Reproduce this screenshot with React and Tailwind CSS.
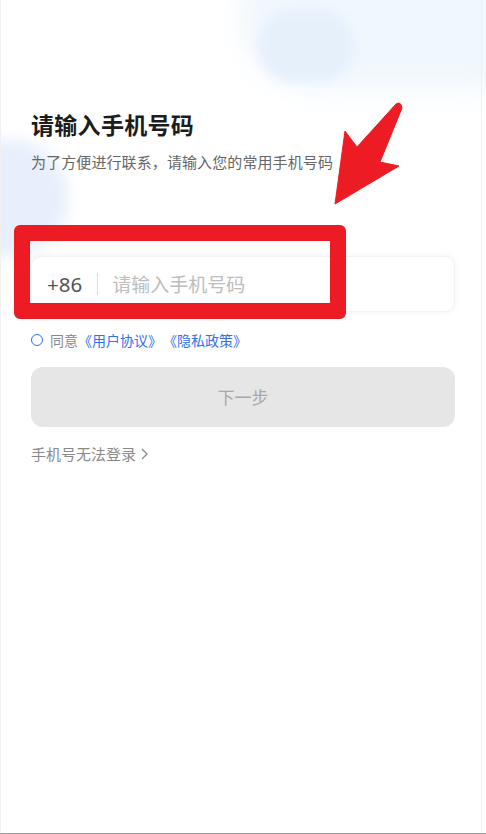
import React from "react";

export default function App() {
  return (
    <div
      className="relative w-[486px] h-[834px] overflow-hidden bg-white border-b border-[#9a9a9a]"
      style={{ fontFamily: '"Noto Sans CJK SC", "Noto Sans", sans-serif' }}
    >
      {/* background clouds */}
      <div className="pointer-events-none absolute -top-[60px] left-[240px] w-[320px] h-[150px] rounded-full bg-[#f0f7fd] blur-[14px]" />
      <div className="pointer-events-none absolute top-[10px] left-[258px] w-[96px] h-[72px] rounded-full bg-[#e6f0fb] blur-[5px]" />
      <div className="pointer-events-none absolute top-[140px] -left-[60px] w-[128px] h-[116px] rounded-full bg-[#e6effb] blur-[8px]" />
      <div className="pointer-events-none absolute top-[0px] left-[0px] w-[482px] h-[834px] border-x border-[#f0f0f0]" />

      <div className="relative px-[31px] pt-[108px]">
        <h1 className="text-[23px] leading-[32px] font-bold text-[#1c1c1c] tracking-[0.3px]">
          请输入手机号码
        </h1>
        <p className="mt-[11px] text-[15px] leading-[22px] text-[#666666] tracking-[0.1px]">
          为了方便进行联系，请输入您的常用手机号码
        </p>

        <div className="mt-[83px] h-[56px] rounded-[10px] bg-white shadow-[0_0_6px_rgba(0,0,0,0.06)] border border-[#f3f3f3] flex items-center pl-[15px]">
          <span className="text-[20.5px] text-[#555555]" style={{ fontFamily: '"Noto Sans", sans-serif' }}>+86</span>
          <span className="ml-[15px] w-px h-[22px] bg-[#dddddd]" />
          <span className="ml-[14px] text-[19px] text-[#bdbdbd]">请输入手机号码</span>
        </div>

        <div className="mt-[19px] flex items-center h-[18px] text-[14px]">
          <span className="w-[12px] h-[12px] rounded-full border-[1.5px] border-[#2f6ff0]" />
          <span className="ml-[7px] text-[#8a8a8a]">同意</span>
          <span className="text-[#2f6ff0]">《用户协议》</span>
          <span className="ml-[1px] text-[#2f6ff0]">《隐私政策》</span>
        </div>

        <button className="mt-[18px] w-full h-[60px] rounded-[12px] bg-[#e6e6e6] flex items-center justify-center text-[17px] text-[#a8a8a8]">
          下一步
        </button>

        <div className="mt-[16px] flex items-center text-[15px] text-[#8a8a8a]">
          <span>手机号无法登录</span>
          <svg width="10" height="14" viewBox="0 0 10 14" className="ml-[3px]">
            <path d="M3 2 L8 7 L3 12" fill="none" stroke="#8a8a8a" strokeWidth="1.3" />
          </svg>
        </div>
      </div>

      {/* red annotation box */}
      <div className="pointer-events-none absolute left-[14px] top-[225px] w-[332px] h-[94px] rounded-[6px] border-[16px] border-[#ed1c24]" />

      {/* red arrow */}
      <svg className="pointer-events-none absolute left-0 top-0" width="486" height="834" viewBox="0 0 486 834">
        <path
          d="M335 204 L345 131 L357 147 L396 104 Q401 101 402 108 L380 162 L399 166 Z"
          fill="#ed1c24"
          stroke="#ed1c24"
          strokeWidth="1"
          strokeLinejoin="round"
        />
      </svg>
    </div>
  );
}
